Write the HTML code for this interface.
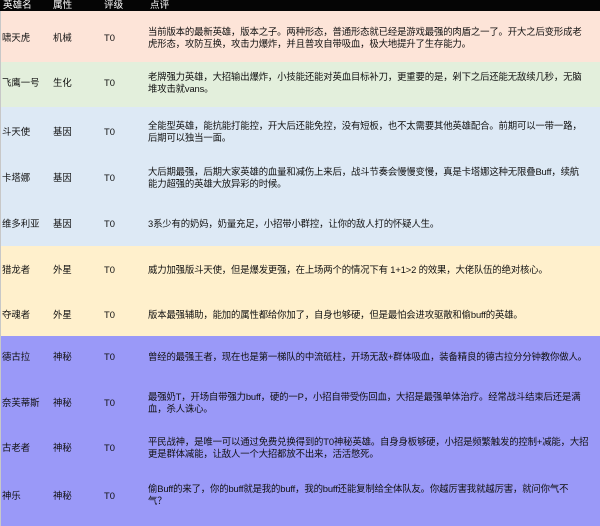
<!DOCTYPE html>
<html><head><meta charset="utf-8"><style>
*{margin:0;padding:0}
body{width:600px;height:526px;position:relative;overflow:hidden;background:#fff;font-family:"Liberation Sans","Noto Sans CJK SC",sans-serif;font-size:9.4px;color:#111}
.b{position:absolute;left:0;width:600px}
.t{position:absolute;white-space:nowrap;line-height:12px}
.c{letter-spacing:-0.15px}
.h{color:#fff;top:0;line-height:11px;font-size:9.6px}
</style></head><body>
<div class="b" style="top:0;height:11px;background:#050505"></div>
<div class="b" style="top:11px;height:51px;background:#fde4d8"></div>
<div class="b" style="top:62px;height:45px;background:#e3efdc"></div>
<div class="b" style="top:107px;height:139px;background:#dde9f5"></div>
<div class="b" style="top:246px;height:90px;background:#fff0cc"></div>
<div class="b" style="top:336px;height:190px;background:#9a99f8"></div>
<div style="position:absolute;left:0;top:11px;width:1px;height:515px;background:#c8c8c8"></div>
<div class="t h" style="left:3px">英雄名</div>
<div class="t h" style="left:53px">属性</div>
<div class="t h" style="left:104px">评级</div>
<div class="t h" style="left:150px">点评</div>

<div class="t" style="left:2px;top:32px">啸天虎</div><div class="t" style="left:53px;top:32px">机械</div><div class="t" style="left:104px;top:32px">T0</div>
<div class="t c" style="left:148px;top:26px">当前版本的最新英雄，版本之子。两种形态，普通形态就已经是游戏最强的肉盾之一了。开大之后变形成老<br>虎形态，攻防互换，攻击力爆炸，并且普攻自带吸血，极大地提升了生存能力。</div>

<div class="t" style="left:2px;top:77px">飞鹰一号</div><div class="t" style="left:53px;top:77px">生化</div><div class="t" style="left:104px;top:77px">T0</div>
<div class="t c" style="left:148px;top:71px">老牌强力英雄，大招输出爆炸，小技能还能对英血目标补刀，更重要的是，剁下之后还能无敌续几秒，无脑<br>堆攻击就vans。</div>

<div class="t" style="left:2px;top:126px">斗天使</div><div class="t" style="left:53px;top:126px">基因</div><div class="t" style="left:104px;top:126px">T0</div>
<div class="t c" style="left:148px;top:120px">全能型英雄，能抗能打能控，开大后还能免控，没有短板，也不太需要其他英雄配合。前期可以一带一路，<br>后期可以独当一面。</div>

<div class="t" style="left:2px;top:172px">卡塔娜</div><div class="t" style="left:53px;top:172px">基因</div><div class="t" style="left:104px;top:172px">T0</div>
<div class="t c" style="left:148px;top:166px">大后期最强，后期大家英雄的血量和减伤上来后，战斗节奏会慢慢变慢，真是卡塔娜这种无限叠Buff，续航<br>能力超强的英雄大放异彩的时候。</div>

<div class="t" style="left:2px;top:218px">维多利亚</div><div class="t" style="left:53px;top:218px">基因</div><div class="t" style="left:104px;top:218px">T0</div>
<div class="t c" style="left:148px;top:218px">3系少有的奶妈，奶量充足，小招带小群控，让你的敌人打的怀疑人生。</div>

<div class="t" style="left:2px;top:264px">猎龙者</div><div class="t" style="left:53px;top:264px">外星</div><div class="t" style="left:104px;top:264px">T0</div>
<div class="t c" style="left:148px;top:264px">威力加强版斗天使，但是爆发更强，在上场两个的情况下有 1+1&gt;2 的效果，大佬队伍的绝对核心。</div>

<div class="t" style="left:2px;top:309px">夺魂者</div><div class="t" style="left:53px;top:309px">外星</div><div class="t" style="left:104px;top:309px">T0</div>
<div class="t c" style="left:148px;top:309px">版本最强辅助，能加的属性都给你加了，自身也够硬，但是最怕会进攻驱散和偷buff的英雄。</div>

<div class="t" style="left:2px;top:351px">德古拉</div><div class="t" style="left:53px;top:351px">神秘</div><div class="t" style="left:104px;top:351px">T0</div>
<div class="t c" style="left:148px;top:351px">曾经的最强王者，现在也是第一梯队的中流砥柱，开场无敌+群体吸血，装备精良的德古拉分分钟教你做人。</div>

<div class="t" style="left:2px;top:397px">奈芙蒂斯</div><div class="t" style="left:53px;top:397px">神秘</div><div class="t" style="left:104px;top:397px">T0</div>
<div class="t c" style="left:148px;top:391px">最强奶T，开场自带强力buff，硬的一P，小招自带受伤回血，大招是最强单体治疗。经常战斗结束后还是满<br>血，杀人诛心。</div>

<div class="t" style="left:2px;top:442px">古老者</div><div class="t" style="left:53px;top:442px">神秘</div><div class="t" style="left:104px;top:442px">T0</div>
<div class="t c" style="left:148px;top:436px">平民战神，是唯一可以通过免费兑换得到的T0神秘英雄。自身身板够硬，小招是频繁触发的控制+减能，大招<br>更是群体减能，让敌人一个大招都放不出来，活活憋死。</div>

<div class="t" style="left:2px;top:490px">神乐</div><div class="t" style="left:53px;top:490px">神秘</div><div class="t" style="left:104px;top:490px">T0</div>
<div class="t c" style="left:148px;top:483px">偷Buff的来了，你的buff就是我的buff，我的buff还能复制给全体队友。你越厉害我就越厉害，就问你气不<br>气？</div>
</body></html>
